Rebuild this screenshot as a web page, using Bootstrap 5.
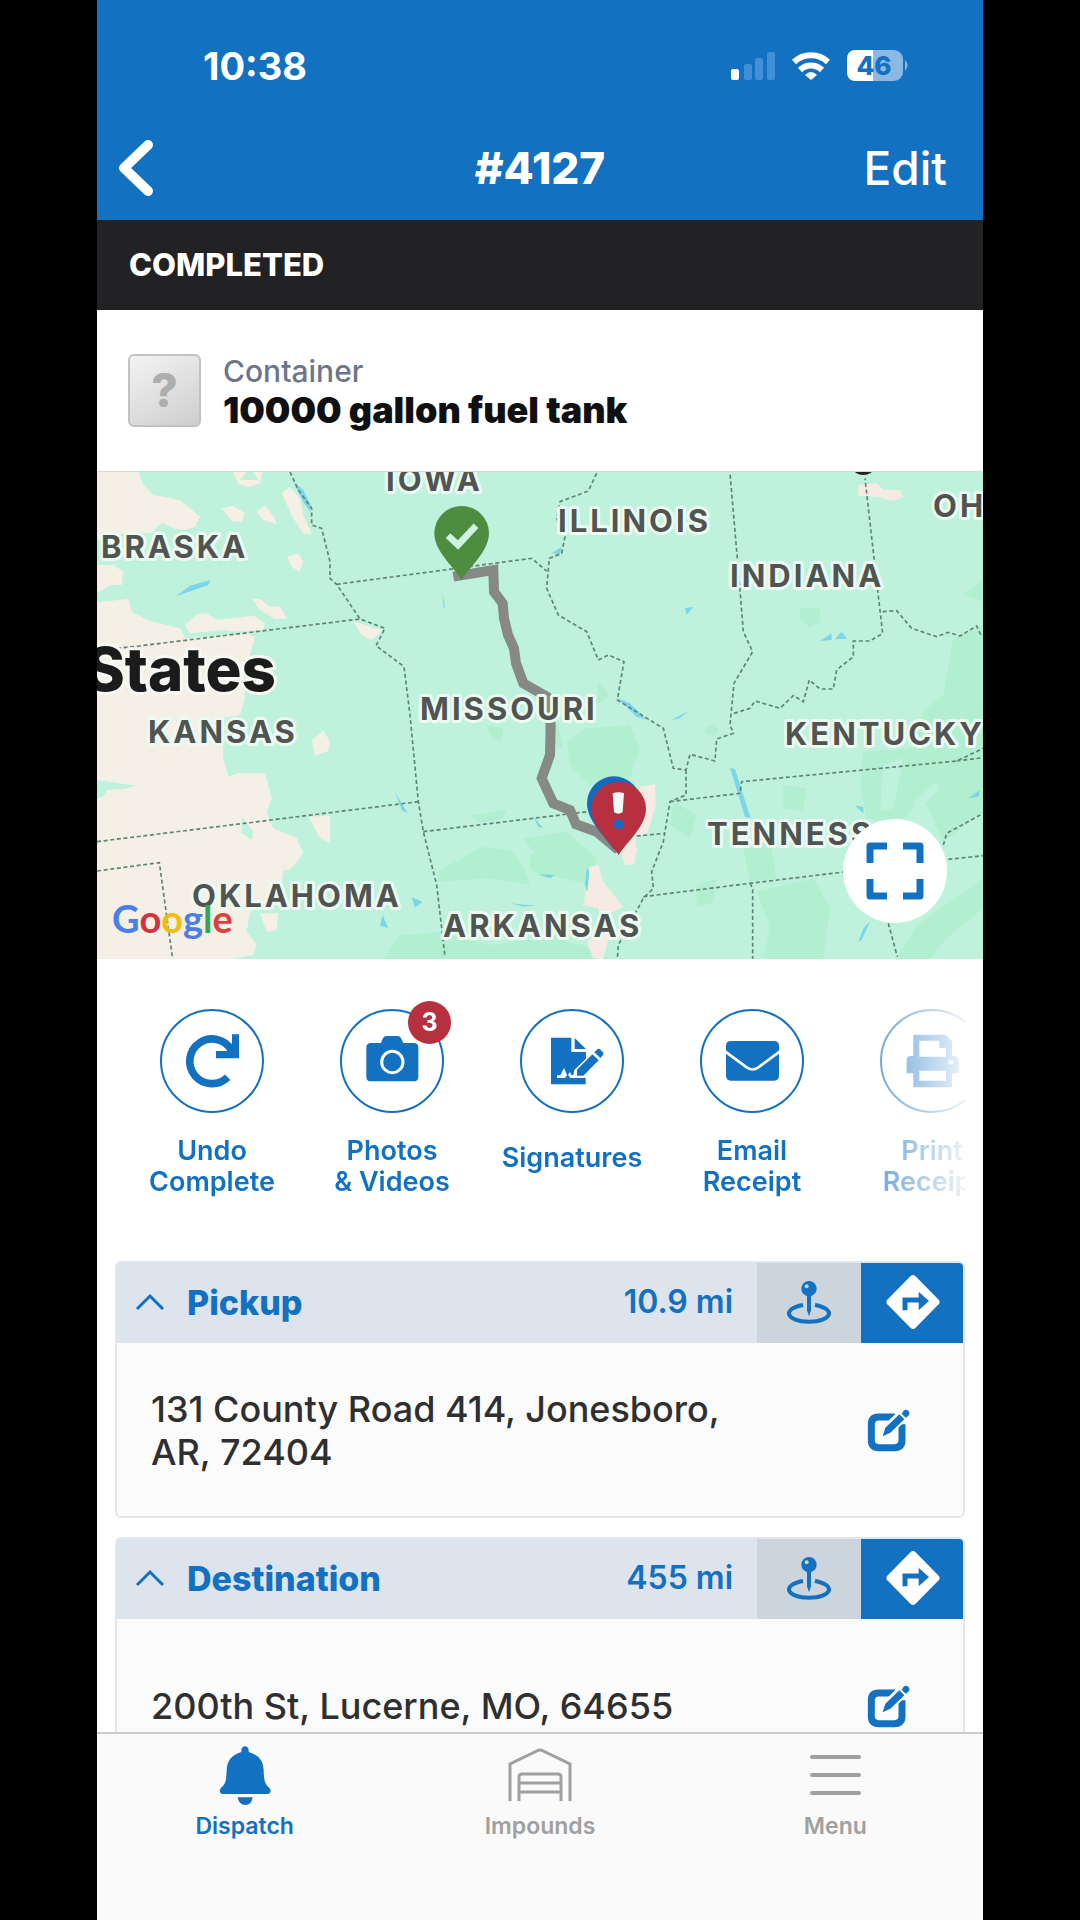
<!DOCTYPE html>
<html lang="en">
<head>
<meta charset="utf-8">
<meta name="viewport" content="width=device-width, initial-scale=1">
<title>#4127</title>
<link href="https://cdn.jsdelivr.net/npm/bootstrap@5.3.0/dist/css/bootstrap.min.css" rel="stylesheet">
<style>
  :root { --brand: #1271c1; --danger: #b6303f; }
  body { background: #000; font-family: Inter, "Liberation Sans", sans-serif; color: #2f2f2f; }
  button { font-family: inherit; }
  .plain-btn { background: none; border: 0; padding: 0; color: inherit; }
  .plain-btn > svg { display: block; margin: 0 auto; }
  .brand-bg { background: var(--brand); }
  .brand-fg { color: var(--brand); }
  .screen { height: 100vh; margin: 0 97px; background: #fff; overflow: hidden; }
  .status-row { height: 116px; padding: 16px 74px 0 106px; font-size: 38px; }
  .title-row { height: 104px; padding: 0 36px 0 20px; }
  .title-row > * { flex: 1 1 0; }
  .title-text { font-size: 44px; font-weight: 800; padding-left: 16px; }
  .edit-link { font-size: 46px; font-weight: 500; }
  .state-bar { background: #222225; height: 90px; padding: 0 32px; font-size: 31px; font-weight: 800; }
  .asset-row { height: 162px; padding: 0 31px; gap: 22px; border-bottom: 1px solid #d4d9d7; }
  .asset-thumb { width: 73px; height: 73px; border: 2px solid #c2c2c2; border-radius: 6px; background: linear-gradient(150deg, #f3f3f3, #cecece); color: #adadad; font-size: 46px; font-weight: 800; }
  .asset-kind { font-size: 30px; line-height: 38px; font-weight: 500; color: #6d7587; }
  .asset-name { font-size: 36px; line-height: 40px; font-weight: 900; color: #101012; }
  .map-box { height: 487px; background: #bff2dc; }
  .map-box svg { display: block; }
  .state-name { font-size: 31px; font-weight: 700; fill: #505552; letter-spacing: 3px; stroke: #edfaf3; stroke-width: 6px; stroke-linejoin: round; paint-order: stroke; }
  .country-name { font-size: 60px; font-weight: 800; fill: #1b1b1c; stroke: #f6f8f4; stroke-width: 6px; stroke-linejoin: round; paint-order: stroke; }
  .map-brand { font-family: Lato, sans-serif; font-size: 38px; font-weight: 700; }
  .expand-btn { width: 104px; height: 104px; right: 36px; bottom: 36px; background: #fff; }
  .quick-row { margin: 0 18px; padding: 50px 0 0 7px; height: 302px; overflow: hidden;
    -webkit-mask-image: linear-gradient(to right, #000 calc(100% - 150px), rgba(0,0,0,.08) 100%);
    mask-image: linear-gradient(to right, #000 calc(100% - 150px), rgba(0,0,0,.08) 100%); }
  .quick-item { flex: 0 0 180px; gap: 22px; }
  .quick-ring { width: 104px; height: 104px; border: 2px solid var(--brand); }
  .quick-label { min-height: 45px; font-size: 27px; line-height: 31px; font-weight: 600; }
  .count-dot { width: 43px; height: 43px; right: -9px; top: -10px; background: var(--danger); font-size: 25px; font-weight: 700; }
  .stop-list { padding: 0 18px; gap: 19px; }
  .stop-card { border: 2px solid #e3e6ea; border-radius: 6px; background: #fbfbfc; overflow: hidden; }
  .stop-head { height: 82px; margin: -2px -2px 0; background: #dde4ed; }
  .stop-toggle { padding: 0 24px 0 20px; }
  .stop-name { font-size: 34px; font-weight: 800; margin-left: 22px; }
  .stop-miles { font-size: 32px; font-weight: 600; }
  .stop-act { width: 104px; }
  .pin-act { background: #ccd5dd; }
  .stop-body { height: 173px; padding: 2px 53px 0 34px; }
  .stop-address { font-size: 36px; line-height: 43px; font-weight: 500; }
  .tab-row { height: 188px; border-top: 2px solid #cacaca; background: #fafafa; padding-top: 10px; }
  .tab-row a { flex: 1 1 0; font-size: 23px; line-height: 28px; font-weight: 600; color: #a0a0a0; gap: 4px; }
  .tab-row a.active { color: var(--brand); }
</style>
</head>
<body>
<svg width="0" height="0" class="position-absolute" aria-hidden="true">
  <symbol id="i-drop" viewBox="740 86 132 144">
    <path d="M788 172C722 184 738 222 806 222S890 184 824 172" fill="none" stroke="currentColor" stroke-width="12" transform="translate(0 -5)"/>
    <circle cx="806" cy="118" r="23" fill="currentColor"/><path d="M800 138h12v45l-6 18-6-18z" fill="currentColor"/>
    <circle cx="799" cy="111" r="6" fill="#ccd5dd"/>
  </symbol>
  <symbol id="i-route" viewBox="1036 69 168 168">
    <path d="M1113 75q7-6 14 0l70 71q6 7 0 14l-70 71q-7 6-14 0l-70-71q-6-7 0-14z" fill="#fff"/>
    <path d="M1096 178v-31h44" fill="none" stroke="#1271c1" stroke-width="15"/><path d="M1137 122l31 28-31 28z" fill="#1271c1"/>
  </symbol>
  <symbol id="i-edit" viewBox="984 484 129 129">
    <path d="M1068 508h-49q-22 0-22 22v48q0 22 22 22h48q22 0 22-22v-48" fill="none" stroke="currentColor" stroke-width="21"/>
    <path d="M1022 572l10-36 62-62 26 26-62 60z" fill="#fbfbfc"/>
    <path d="M1031 566l8-26 42-40 15 15-42 40z" fill="currentColor"/>
    <path d="M1088 498l6-9q6-6 14 0q6 7 1 14l-8 8z" fill="currentColor"/>
  </symbol>
  <symbol id="i-up" viewBox="0 0 30 18"><path d="M2 16L15 3l13 13" fill="none" stroke="currentColor" stroke-width="3"/></symbol>
</svg>

<div class="screen d-flex flex-column">
  <header class="brand-bg text-white flex-shrink-0">
    <div class="status-row d-flex align-items-center justify-content-between">
      <span class="fw-bold">10:38</span>
      <svg width="180" height="36" viewBox="730 48 180 36" role="img" aria-label="Signal, Wi-Fi, battery">
        <rect x="732" y="69" width="8" height="11" rx="2" fill="#fff"/>
        <g fill="#418fd6"><rect x="745" y="64" width="8" height="16" rx="2"/><rect x="756" y="58" width="8" height="22" rx="2"/><rect x="768" y="52" width="8" height="28" rx="2"/></g>
        <g fill="none" stroke="#fff" stroke-width="6"><path d="M795 62a25 25 0 0 1 34 0"/><path d="M801 70a16 16 0 0 1 22 0"/></g>
        <path d="M806 75q6-6 12 0l-6 5z" fill="#fff"/>
        <path d="M906 60q5 5 0 11z" fill="#8bb9e3"/>
        <rect x="848" y="50" width="56" height="31" rx="9" fill="#8bb9e3"/>
        <path d="M874 50h-17q-9 0-9 9v13q0 9 9 9h17z" fill="#fff"/>
        <text x="875" y="75" text-anchor="middle" font-size="26" font-weight="800" fill="#1271c1">46</text>
      </svg>
    </div>
    <div class="title-row d-flex align-items-center">
      <div><button type="button" class="plain-btn d-block" aria-label="Back">
        <svg width="38" height="58" viewBox="0 0 38 58"><path d="M31 6L7 29l24 23" fill="none" stroke="#fff" stroke-width="10" stroke-linecap="round" stroke-linejoin="round"/></svg>
      </button></div>
      <h1 class="title-text text-center mb-0">#4127</h1>
      <div class="text-end"><button type="button" class="plain-btn edit-link">Edit</button></div>
    </div>
  </header>

  <div class="state-bar d-flex align-items-center text-white flex-shrink-0">COMPLETED</div>

  <section class="asset-row d-flex align-items-center flex-shrink-0">
    <div class="asset-thumb d-flex align-items-center justify-content-center flex-shrink-0">?</div>
    <div>
      <div class="asset-kind">Container</div>
      <div class="asset-name">10000 gallon fuel tank</div>
    </div>
  </section>

  <section class="map-box position-relative overflow-hidden flex-shrink-0" aria-label="Route map">
    <svg width="100%" height="100%" viewBox="0 0 886 487" preserveAspectRatio="xMidYMid slice">
      <g transform="translate(-7 -7) scale(.33333)">
        <!-- plains -->
        <g fill="#f5f0e6">
          <path d="M21 21H145L160 60 190 90 270 105 330 155 315 185 285 195 250 190 215 172 185 205 120 200 21 225Z"/>
          <path d="M21 300H70L100 320 95 360 60 360 30 380H21Z"/>
          <path d="M21 412L115 402 125 440 180 468 270 490 285 520 420 510 495 515 480 570 460 640 465 700 450 750 395 760 400 880 415 935 440 925 525 925 535 960 545 1000 530 1045 550 1090 620 1120 640 1165 600 1215 580 1215 570 1290 480 1340 470 1400 500 1440 490 1470 430 1482H21Z"/>
          <path d="M285 480L320 448 350 445 380 465 440 458 490 452 525 475 520 495 440 500 400 495 300 505Z"/>
        </g>
        <g fill="#f5efe6">
          <path d="M430 21H518L510 55 480 65 445 58ZM395 130L430 122 465 145 455 170 425 168ZM500 140L525 120 555 160 560 178 520 165ZM575 85L600 65 630 100 640 150 665 208 640 205 610 160ZM592 275L625 265 640 290 628 320 605 305ZM487 402L510 402 540 425 570 425 592 460 555 462 510 435ZM790 468L855 490 880 495 845 525 815 510ZM665 828L700 795 720 830 715 858 675 872ZM655 1055L720 1052 720 1135 690 1120ZM510 1345L565 1345 560 1395 530 1400Z"/>
          <path d="M415 520L470 500 490 515 465 565 430 555Z"/>
        </g>
        <path fill="#bff2dc" d="M450 45h55l-15-24h-20zM21 945L140 962 100 972 50 975 40 995 21 1000ZM455 1055L490 1100 485 1125 455 1105Z"/>
        <!-- woodland -->
        <g fill="#b2efd0">
          <path d="M1050 1215L1180 1145 1260 1155 1300 1200 1320 1260 1200 1240 1040 1250ZM930 1410L1050 1400 1200 1440 1350 1420 1480 1440 1560 1482H880ZM1300 1120L1430 1100 1520 1180 1500 1260 1380 1230ZM1140 1050L1250 1035 1240 1060 1170 1075ZM1190 780L1240 790 1235 830 1200 810Z"/>
          <g transform="translate(1320 0)">
            <path d="M110 830L170 790 300 780 330 850 300 940 180 960 120 900ZM40 780L80 760 100 850 60 830ZM205 650L240 690 200 720ZM810 430H870V470L840 490 810 460ZM1300 390L1360 340V1040L1240 1130 1180 1000 1100 1080 1010 1060 990 960 1000 860 1150 850 1180 740 1240 690 1270 520 1360 480V410ZM525 790L550 778 568 795 550 815 525 805ZM640 1150L720 1130 740 1240 660 1250ZM680 1280L850 1240 900 1330 880 1482H700L720 1380ZM760 960L830 970 820 1040 760 1030ZM1160 1380L1360 1240V1330L1250 1420 1200 1482H1100ZM430 1010L500 1050 480 1120 420 1080ZM0 1170L90 1160 100 1220 40 1240 0 1210ZM0 1430L90 1400 150 1482H0ZM500 1260L560 1240 550 1310 500 1330Z"/>
            <path fill="#bff2dc" d="M1150 1010l70-60 10 20-70 70zM1060 900l60-20-30 150-40 10z"/>
          </g>
        </g>
        <g fill="#f6ebe3" transform="translate(1320 0)">
          <path d="M330 965L375 958 378 1020 350 1110 320 1110 310 1190 285 1200 275 1170 320 1100ZM180 1205L205 1200 220 1250 280 1325 230 1350 240 1400 220 1482 190 1480 170 1430 215 1400 205 1330 160 1320ZM985 60L1040 55 1060 75 1110 75 1120 95 1090 108 1040 95 985 92ZM295 1130L322 1150 312 1198 285 1200Z"/>
        </g>
        <!-- water -->
        <g fill="#7bd6ea">
          <path d="M610 50L640 75 662 120 660 140 640 110ZM258 394L300 362 362 345 355 360ZM1058 385L1065 430 1060 425ZM915 980L935 1015 953 1045 935 1035ZM965 1297L998 1310 975 1328ZM878 1350L895 1390 870 1382ZM1262 1315L1335 1322 1300 1325Z"/>
          <g transform="translate(1320 0)"><path d="M262 700L300 715 350 765 320 755ZM425 765L475 738 450 760ZM465 430L490 425 470 450ZM870 528L905 505 905 525ZM915 522L935 500 952 522ZM600 908L615 912 662 1060 645 1055ZM65 265L95 245 90 268ZM10 1055L40 1090 25 1085ZM25 1228L75 1230 60 1240ZM170 1210L178 1220 172 1280 165 1260ZM1315 1000L1350 975 1345 995ZM975 1022L1000 1025 1000 1045ZM985 1430L1000 1390 1020 1370 995 1425Z"/></g>
        </g>
        <!-- state lines -->
        <g fill="none" stroke="#5f8476" stroke-width="5" stroke-dasharray="12 8">
          <path d="M600 21L625 75 665 130V180L695 190 720 290V340L740 358 810 462M740 358L1100 310 1325 280 1370 318M21 555L130 545 810 462 885 490 858 542 942 605 960 750 985 1010 1000 1100 1040 1260 1065 1475M21 1130L985 1010M1000 1100L1510 1038M21 1218L208 1193 248 1482"/>
          <g transform="translate(1320 0)">
            <path d="M200 25L175 78 90 110 80 160 105 215 95 265 58 280 50 370 85 450 170 500 205 585 235 570 282 590 262 705 400 790 430 910 468 915 480 868 555 888 560 822 610 805 600 780 612 655 668 560 640 500 628 350 600 25M612 745L660 730 675 708 750 730 790 692 820 710 838 645 870 672H910L920 615 970 575V528H1020L1058 505 1040 350 1005 40M1058 440L1100 437 1145 490 1220 515 1255 502 1290 513 1340 483 1355 515M468 915V990L420 1010 400 1130 365 1220 370 1270 340 1300 265 1440 262 1482M420 1010L630 985 635 950 1280 888 1360 850M1280 888L1360 878M320 1113L405 1105M340 1295L660 1255 950 1220M1255 1183L1360 1172M660 1255L668 1270V1482M1240 1140L1250 1105 1360 1045M1075 1375L1102 1475"/>
          </g>
        </g>
        <ellipse cx="2320" cy="10" rx="30" ry="20" fill="#222"/>
        <!-- route -->
        <path d="M1090 335L1210 315 1212 380 1238 415 1242 460 1254 510 1272 550 1278 595 1300 655 1370 695 1382 780 1380 870 1355 940 1390 1015 1440 1035 1458 1078 1520 1100 1585 1155" fill="none" stroke="#868986" stroke-width="30"/>
      </g>
      <g class="state-name">
        <text x="289" y="19">IOWA</text><text x="4" y="86">BRASKA</text><text x="461" y="60">ILLINOIS</text>
        <text x="836" y="45">OH</text><text x="633" y="115">INDIANA</text><text x="51" y="271">KANSAS</text>
        <text x="323" y="248">MISSOURI</text><text x="688" y="273">KENTUCKY</text><text x="610" y="373">TENNESS</text>
        <text x="95" y="435">OKLAHOMA</text><text x="346" y="465">ARKANSAS</text>
      </g>
      <text class="country-name" x="179" y="219" text-anchor="end">States</text>
      <text class="map-brand" x="15" y="461"><tspan fill="#4a7fe6">G</tspan><tspan fill="#d0333f">o</tspan><tspan fill="#efbd10">o</tspan><tspan fill="#4a7fe6">g</tspan><tspan fill="#34a457">l</tspan><tspan fill="#dd3f3c">e</tspan></text>
      <g transform="translate(-7 -7) scale(.33333)">
        <path d="M1115 345C1095 310 1033 260 1033 205A82 82 0 0 1 1197 205C1197 260 1135 310 1115 345Z" fill="#4c8d40"/>
        <path d="M1074 212l30 28 54-58" fill="none" stroke="#cdf5e2" stroke-width="20"/>
        <path d="M1572 1155C1550 1120 1491 1070 1491 1015A81 81 0 0 1 1653 1015Z" fill="#1769bd"/>
        <path d="M1586 1170C1566 1135 1504 1085 1504 1032A82 82 0 0 1 1668 1032C1668 1085 1606 1135 1586 1170Z" fill="#b6303f"/>
        <path d="M1568 985q18-7 34 0l-4 56q-13 10-26 0z" fill="#f2fbf6"/><circle cx="1586" cy="1078" r="15" fill="#1769bd"/>
      </g>
    </svg>
    <button type="button" class="expand-btn position-absolute rounded-circle border-0 p-0 d-flex align-items-center justify-content-center" aria-label="Full screen">
      <svg width="58" height="58" viewBox="0 0 58 58"><path d="M21 4H4v17M37 4h17v17M21 54H4V37M37 54h17V37" fill="none" stroke="#1271c1" stroke-width="7" stroke-linejoin="round"/></svg>
    </button>
  </section>

  <nav class="quick-row d-flex align-items-start flex-shrink-0 brand-fg" aria-label="Actions">
    <button type="button" class="plain-btn quick-item d-flex flex-column align-items-center">
      <span class="quick-ring rounded-circle d-flex align-items-center justify-content-center flex-shrink-0">
        <svg width="64" height="64" viewBox="270 146 192 192"><path d="M413 291A67 67 0 1 1 424 209" fill="none" stroke="currentColor" stroke-width="23"/><path d="M426 162h21v72h-69v-22h36l12-14z" fill="currentColor"/></svg>
      </span>
      <span class="quick-label d-flex align-items-center">Undo<br>Complete</span>
    </button>
    <button type="button" class="plain-btn quick-item d-flex flex-column align-items-center">
      <span class="quick-ring position-relative rounded-circle d-flex align-items-center justify-content-center flex-shrink-0">
        <svg width="64" height="64" viewBox="813 146 192 192"><path d="M846 188h30l5-13q3-8 10-8h36q7 0 10 8l6 13h31q14 0 14 14v87q0 14-14 14H846q-14 0-14-14v-87q0-14 14-14z" fill="currentColor"/><circle cx="910" cy="245" r="32" fill="none" stroke="#fff" stroke-width="9"/></svg>
        <span class="count-dot position-absolute rounded-circle text-white d-flex align-items-center justify-content-center">3</span>
      </span>
      <span class="quick-label d-flex align-items-center">Photos<br>&amp; Videos</span>
    </button>
    <button type="button" class="plain-btn quick-item d-flex flex-column align-items-center">
      <span class="quick-ring rounded-circle d-flex align-items-center justify-content-center flex-shrink-0">
        <svg width="64" height="64" viewBox="32 146 192 192"><path d="M65 172h61v43h44v20l-35 34-3 16-6-1-4-9-8 11-10-23-11 22h-10v8h24l8-11 8 11h46v19H65z" fill="currentColor"/><path d="M136 173l34 33h-34z" fill="currentColor"/><path d="M143 268l46-46 19 18-46 46h-19z" fill="currentColor"/><path d="M195 216l9-9q4-3 8 0l9 9q3 4 0 8l-8 9z" fill="currentColor"/></svg>
      </span>
      <span class="quick-label d-flex align-items-center">Signatures</span>
    </button>
    <button type="button" class="plain-btn quick-item d-flex flex-column align-items-center">
      <span class="quick-ring rounded-circle d-flex align-items-center justify-content-center flex-shrink-0">
        <svg width="64" height="64" viewBox="573 146 192 192"><rect x="591" y="182" width="159" height="119" rx="14" fill="currentColor"/><path d="M588 213l66 49q17 11 33 0l66-49" fill="none" stroke="#fff" stroke-width="8"/></svg>
      </span>
      <span class="quick-label d-flex align-items-center">Email<br>Receipt</span>
    </button>
    <button type="button" class="plain-btn quick-item d-flex flex-column align-items-center">
      <span class="quick-ring rounded-circle d-flex align-items-center justify-content-center flex-shrink-0">
        <svg width="64" height="64" viewBox="1114 146 192 192"><path fill-rule="evenodd" d="M1154 163h96l20 20v44h6q14 0 14 12v40h-20v42h-116v-42h-20v-40q0-12 14-12h6zM1172 181v48h80v-26h-20v-22zM1172 271v30h80v-30zM1260 240v12h14v-12z" fill="currentColor"/></svg>
      </span>
      <span class="quick-label d-flex align-items-center">Print<br>Receipt</span>
    </button>
  </nav>

  <main class="stop-list d-flex flex-column flex-grow-1 overflow-hidden">
    <section class="stop-card flex-shrink-0">
      <div class="stop-head d-flex brand-fg">
        <button type="button" class="plain-btn stop-toggle d-flex align-items-center flex-grow-1" aria-expanded="true">
          <svg class="mx-0" width="30" height="18"><use href="#i-up"/></svg>
          <span class="stop-name">Pickup</span><span class="stop-miles ms-auto">10.9 mi</span>
        </button>
        <button type="button" class="plain-btn stop-act pin-act" aria-label="Locate pickup"><svg width="44" height="48"><use href="#i-drop"/></svg></button>
        <button type="button" class="plain-btn stop-act brand-bg" aria-label="Directions to pickup"><svg width="56" height="56"><use href="#i-route"/></svg></button>
      </div>
      <div class="stop-body d-flex align-items-center justify-content-between">
        <div class="stop-address">131 County Road 414, Jonesboro,<br>AR, 72404</div>
        <button type="button" class="plain-btn brand-fg" aria-label="Edit pickup"><svg width="43" height="43"><use href="#i-edit"/></svg></button>
      </div>
    </section>
    <section class="stop-card flex-shrink-0">
      <div class="stop-head d-flex brand-fg">
        <button type="button" class="plain-btn stop-toggle d-flex align-items-center flex-grow-1" aria-expanded="true">
          <svg class="mx-0" width="30" height="18"><use href="#i-up"/></svg>
          <span class="stop-name">Destination</span><span class="stop-miles ms-auto">455 mi</span>
        </button>
        <button type="button" class="plain-btn stop-act pin-act" aria-label="Locate destination"><svg width="44" height="48"><use href="#i-drop"/></svg></button>
        <button type="button" class="plain-btn stop-act brand-bg" aria-label="Directions to destination"><svg width="56" height="56"><use href="#i-route"/></svg></button>
      </div>
      <div class="stop-body d-flex align-items-center justify-content-between">
        <div class="stop-address">200th St, Lucerne, MO, 64655</div>
        <button type="button" class="plain-btn brand-fg" aria-label="Edit destination"><svg width="43" height="43"><use href="#i-edit"/></svg></button>
      </div>
    </section>
  </main>

  <footer class="tab-row d-flex align-items-start flex-shrink-0">
    <a href="#dispatch" class="active d-flex flex-column align-items-center text-decoration-none">
      <svg width="60" height="64" viewBox="373 672 180 192"><path d="M452 696v-6q2-11 11-11t11 11v6q44 12 45 55c1 38 6 42 18 54 6 7 2 17-7 17H397c-9 0-13-10-7-17 12-12 17-16 18-54q1-43 44-55zM441 832h45q-3 23-22 23t-23-23z" fill="currentColor"/></svg>
      Dispatch
    </a>
    <a href="#impounds" class="d-flex flex-column align-items-center text-decoration-none">
      <svg width="68" height="64" viewBox="507 1744 68 64"><path d="M511 1801v-37l29-14q1 0 2 0l29 14v37M520 1801v-24q0-3 3-3h36q3 0 3 3v24M520 1783h42M520 1792h42" fill="none" stroke="currentColor" stroke-width="3"/></svg>
      Impounds
    </a>
    <a href="#menu" class="d-flex flex-column align-items-center text-decoration-none">
      <svg width="60" height="64" viewBox="805 1744 60 64"><path d="M812 1757h47M812 1775h47M812 1793h47" stroke="currentColor" stroke-width="4" stroke-linecap="round"/></svg>
      Menu
    </a>
  </footer>
</div>
<script src="https://cdn.jsdelivr.net/npm/bootstrap@5.3.0/dist/js/bootstrap.bundle.min.js"></script>
</body>
</html>
